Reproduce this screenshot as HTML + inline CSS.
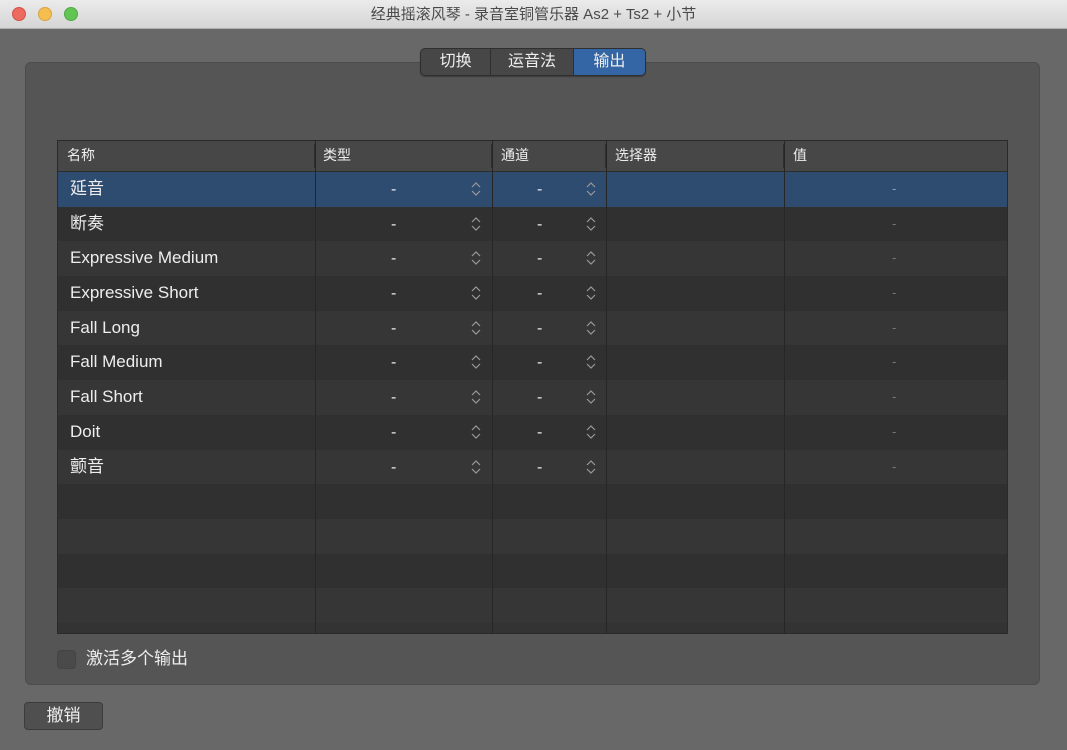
<!DOCTYPE html>
<html><head><meta charset="utf-8"><style>
*{margin:0;padding:0;box-sizing:border-box}
body{width:1067px;height:750px;background:#686868;font-family:"Liberation Sans","Noto Sans CJK SC",sans-serif;position:relative;overflow:hidden;color:#eee}
.tb{position:absolute;left:0;top:0;width:1067px;height:29px;background:linear-gradient(#ecebec,#d6d5d6);border-bottom:1px solid #b0b0b0;text-align:center;font-size:15px;line-height:29px;color:#4a4a4a}
.dot{position:absolute;top:7px;width:14px;height:14px;border-radius:50%}
.panel{position:absolute;left:25px;top:62px;width:1015px;height:623px;background:#555;border-radius:6px;border:1px solid #4c4c4c}
.seg{position:absolute;left:420px;top:48px;width:226px;height:28px;border-radius:5px;background:#474747;border:1px solid #2f2f2f;display:flex;font-size:16px;overflow:hidden;box-shadow:0 1px 1px rgba(0,0,0,.3)}
.seg div{height:100%;line-height:26px;text-align:center;color:#eee}
.tbl{position:absolute;left:57px;top:140px;width:951px;height:494px;background:#333;border:1px solid #2a2a2a;overflow:hidden}
.hd{height:31px;background:#474747;border-bottom:1px solid #2c2c2c;position:relative;font-size:14px}
.hd span{position:absolute;top:0;line-height:28px}
.row{height:34.7px;position:relative;font-size:17px;line-height:34px}
.row span{position:absolute;top:0;height:34px}
.row .n{left:12px}
.row .d{font-size:16px}
.row .v{left:834px;font-size:13px;color:#777}
.vl{position:absolute;top:0;width:1px;height:494px;background:#262626}
.hl{position:absolute;top:3px;width:2px;height:24px;background:#2e2e2e}
svg.ar{position:absolute;top:9px}
.cj{display:inline-block;line-height:34px}
</style></head><body>
<div class="tb"><div class="dot" style="left:12px;background:#ed6a5e;border:1px solid #d2524a"></div><div class="dot" style="left:38px;background:#f5bf4f;border:1px solid #d6a243"></div><div class="dot" style="left:64px;background:#61c554;border:1px solid #52a842"></div>经典摇滚风琴 - 录音室铜管乐器 As2 + Ts2 + 小节</div>
<div class="panel"></div>
<div class="seg"><div style="width:71px;border-right:1px solid #2f2f2f">切换</div><div style="width:83px;border-right:1px solid #2f2f2f">运音法</div><div style="width:72px;background:#3465a4">输出</div></div>
<div class="tbl">
<div class="hd"><span style="left:9px">名称</span><div class="hl" style="left:256px"></div><span style="left:265px">类型</span><div class="hl" style="left:433px"></div><span style="left:443px">通道</span><div class="hl" style="left:547px"></div><span style="left:557px">选择器</span><div class="hl" style="left:725px"></div><span style="left:735px">值</span></div>
<div id="rows"></div>
<div class="vl" style="left:257px"></div><div class="vl" style="left:434px"></div><div class="vl" style="left:548px"></div><div class="vl" style="left:726px"></div>
</div>
<div style="position:absolute;left:57px;top:650px;width:19px;height:19px;border-radius:4px;background:#4a4a4a;border:1px solid #444"></div>
<div style="position:absolute;left:86px;top:647px;font-size:17px;line-height:24px">激活多个输出</div>
<div style="position:absolute;left:24px;top:702px;width:79px;height:28px;border-radius:4px;background:#4f4f4f;border:1px solid #3c3c3c;text-align:center;line-height:26px;font-size:17px">撤销</div>
<script>
var names=["延音","断奏","Expressive Medium","Expressive Short","Fall Long","Fall Medium","Fall Short","Doit","颤音"];
var h="";
var ar='<path d="M2 6L6 2L10 6M2 10L6 14L10 10" fill="none" stroke="#999" stroke-width="1.2"/>';
for(var i=0;i<13;i++){
 var bg=i==0?"#2e4b70":(i%2?"#303030":"#363636");
 h+='<div class="row" style="background:'+bg+'">';
 if(i<9){h+='<span class="n">'+names[i]+'</span><span class="d" style="left:333px;top:1px">-</span><span class="d" style="left:479px;top:1px">-</span><svg class="ar" style="left:412px" width="12" height="16">'+ar+'</svg><svg class="ar" style="left:527px" width="12" height="16">'+ar+'</svg><span class="v" style="color:'+(i==0?'#8aa0c0':'#777')+'">-</span>';}
 h+='</div>';
}
document.getElementById("rows").innerHTML=h;
</script>
</body></html>
